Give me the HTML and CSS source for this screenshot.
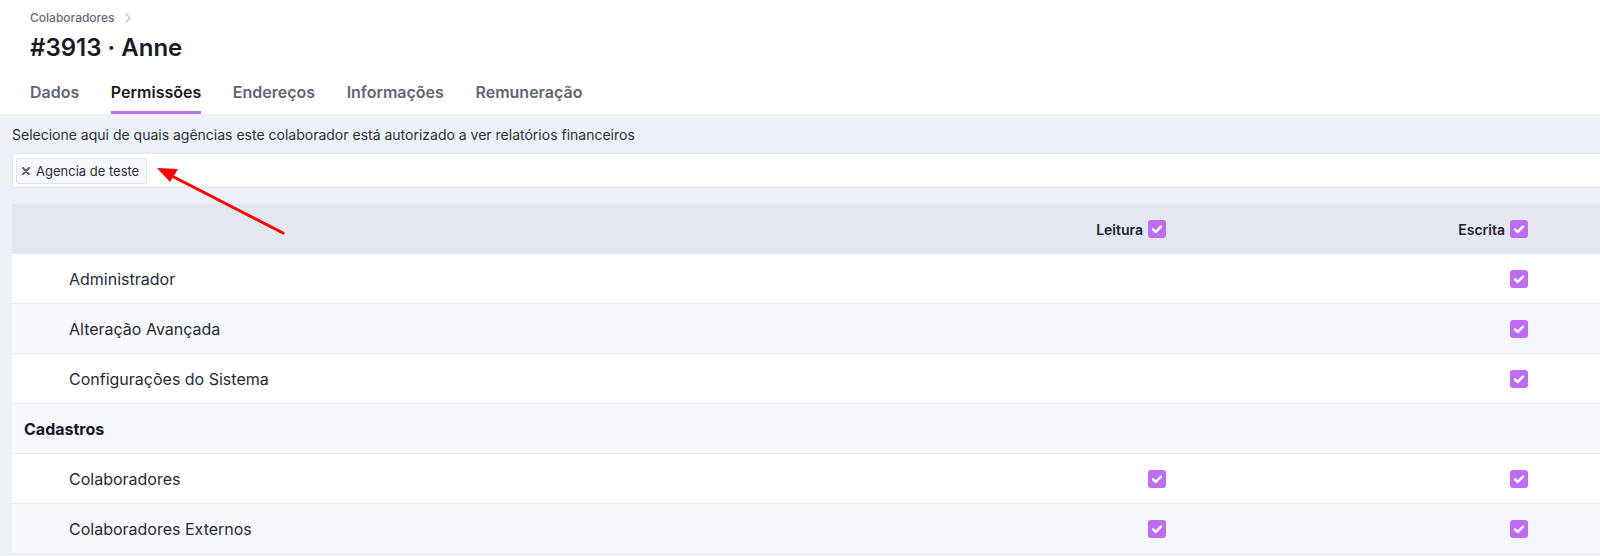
FILE: index.html
```html
<!DOCTYPE html>
<html lang="pt-BR">
<head>
  <meta charset="UTF-8">
  <meta name="viewport" content="width=device-width, initial-scale=1.0">
  <title>#3913 · Anne - Permissões</title>
  <link rel="stylesheet" href="styles.css">
</head>
<body>
  <header class="page-header">
    <nav class="breadcrumb">
      <span>Colaboradores</span>
      <svg class="chevron" width="8" height="10" viewBox="0 0 8 10"><path d="M2 1l4 4-4 4" fill="none" stroke="currentColor" stroke-width="1.5" stroke-linecap="round" stroke-linejoin="round"/></svg>
    </nav>
    <h1>#3913 · Anne</h1>
    <nav class="tabs">
      <a class="tab">Dados</a>
      <a class="tab active">Permissões</a>
      <a class="tab">Endereços</a>
      <a class="tab">Informações</a>
      <a class="tab">Remuneração</a>
    </nav>
  </header>

  <main class="content">
    <p class="hint">Selecione aqui de quais agências este colaborador está autorizado a ver relatórios financeiros</p>
    <div class="tag-input">
      <span class="tag">
        <svg class="tag-x" width="8" height="8" viewBox="0 0 8 8"><path d="M1 1l6 6M7 1L1 7"/></svg>
        Agencia de teste
      </span>
    </div>

    <div class="perm-table">
      <div class="row head">
        <div class="cell name"></div>
        <div class="cell check">Leitura <span class="box"><svg viewBox="0 0 18 18"><path d="M5 9.3l2.7 2.6L13 6.6"/></svg></span></div>
        <div class="cell check">Escrita <span class="box"><svg viewBox="0 0 18 18"><path d="M5 9.3l2.7 2.6L13 6.6"/></svg></span></div>
      </div>
      <div class="row">
        <div class="cell name sub">Administrador</div>
        <div class="cell check"></div>
        <div class="cell check"><span class="box"><svg viewBox="0 0 18 18"><path d="M5 9.3l2.7 2.6L13 6.6"/></svg></span></div>
      </div>
      <div class="row alt">
        <div class="cell name sub">Alteração Avançada</div>
        <div class="cell check"></div>
        <div class="cell check"><span class="box"><svg viewBox="0 0 18 18"><path d="M5 9.3l2.7 2.6L13 6.6"/></svg></span></div>
      </div>
      <div class="row">
        <div class="cell name sub">Configurações do Sistema</div>
        <div class="cell check"></div>
        <div class="cell check"><span class="box"><svg viewBox="0 0 18 18"><path d="M5 9.3l2.7 2.6L13 6.6"/></svg></span></div>
      </div>
      <div class="row alt">
        <div class="cell name group">Cadastros</div>
        <div class="cell check"></div>
        <div class="cell check"></div>
      </div>
      <div class="row">
        <div class="cell name sub">Colaboradores</div>
        <div class="cell check"><span class="box"><svg viewBox="0 0 18 18"><path d="M5 9.3l2.7 2.6L13 6.6"/></svg></span></div>
        <div class="cell check"><span class="box"><svg viewBox="0 0 18 18"><path d="M5 9.3l2.7 2.6L13 6.6"/></svg></span></div>
      </div>
      <div class="row alt">
        <div class="cell name sub">Colaboradores Externos</div>
        <div class="cell check"><span class="box"><svg viewBox="0 0 18 18"><path d="M5 9.3l2.7 2.6L13 6.6"/></svg></span></div>
        <div class="cell check"><span class="box"><svg viewBox="0 0 18 18"><path d="M5 9.3l2.7 2.6L13 6.6"/></svg></span></div>
      </div>
    </div>
  </main>

  <!-- seta de anotação -->
  <svg class="arrow" width="300" height="250" viewBox="0 0 300 250">
    <path d="M283 233L164 172" stroke="#ff0000" stroke-width="3" fill="none" stroke-linecap="round"/>
    <path d="M157 168L178 169L170 182Z" fill="#ff0000"/>
  </svg>
</body>
</html>
```

FILE: styles.css
```css
body {
  font-family: Inter, "Noto Sans", sans-serif;
  margin: 0;
  padding: 0;
  background-color: #edf0f7;
  color: #1e2230;
  position: relative;
}
.page-header {
  background: white;
  padding: 10px 30px 0;
}
.breadcrumb {
  display: flex;
  align-items: center;
  gap: 9px;
  font-size: 12px;
  line-height: 16px;
  font-weight: 500;
  color: #656c7c;
}
.chevron {
  color: #c3c7cf;
}
h1 {
  margin: 7px 0 0;
  font-size: 24px;
  line-height: 30px;
  font-weight: 600;
  color: #161a25;
}
.tabs {
  display: flex;
  gap: 31.6px;
  margin-top: 17px;
}
.tab {
  font-size: 16px;
  line-height: 24px;
  font-weight: 600;
  color: #5f6678;
  padding-bottom: 7px;
  border-bottom: 3px solid transparent;
  border-radius: 2px 2px 0 0;
}
.tab.active {
  color: #161a25;
  border-bottom-color: #bc72ee;
}
.content {
  padding: 12px 0 0 12px;
}
.hint {
  margin: 0;
  font-size: 14px;
  line-height: 18px;
  color: #2b2f3a;
}
.tag-input {
  margin-top: 9px;
  background: white;
  border: 1px solid #e1e5ee;
  border-right: none;
  border-radius: 3px 0 0 3px;
  padding: 4px 3px 3px;
  display: flex;
}
.tag {
  display: inline-flex;
  align-items: center;
  gap: 6px;
  height: 26px;
  box-sizing: border-box;
  padding: 0 7px 0 5px;
  background: #f5f7fb;
  border: 1px solid #dde2ea;
  border-radius: 2px;
  font-size: 13px;
  color: #2b2f3a;
}
.tag-x path {
  stroke: #5d6473;
  stroke-width: 2;
  stroke-linecap: round;
}
.perm-table {
  margin-top: 16px;
}
.row {
  display: grid;
  grid-template-columns: 1fr 362px 362px;
  height: 50px;
  background: white;
  border-bottom: 1px solid #e6eaf2;
  box-sizing: border-box;
}
.row.alt {
  background: #f6f8fc;
}
.row.head {
  background: #e2e7f0;
  border-bottom: none;
  font-size: 14px;
  font-weight: 600;
}
.cell {
  display: flex;
  align-items: center;
}
.cell.name {
  font-size: 16px;
  color: #272b36;
}
.cell.sub {
  padding-left: 57px;
}
.cell.group {
  padding-left: 12px;
  font-weight: 700;
  color: #161a25;
}
.cell.check {
  justify-content: flex-end;
  padding-right: 72px;
  gap: 5px;
}
.box {
  width: 18px;
  height: 18px;
  border-radius: 3px;
  background: #be6cf0;
  display: inline-block;
}
.box svg {
  display: block;
  width: 18px;
  height: 18px;
}
.box path {
  fill: none;
  stroke: white;
  stroke-width: 2.4;
  stroke-linecap: round;
  stroke-linejoin: round;
}
.arrow {
  position: absolute;
  left: 0;
  top: 0;
}
```
